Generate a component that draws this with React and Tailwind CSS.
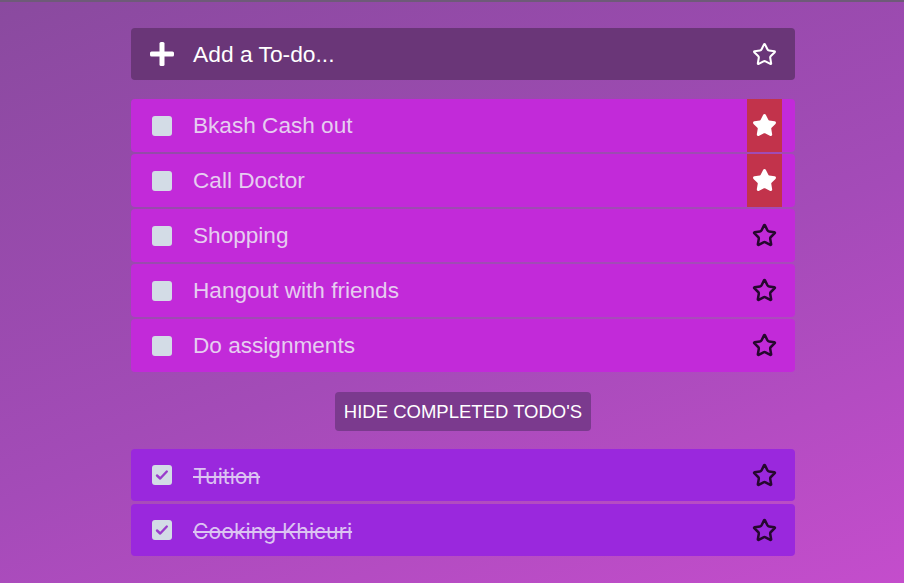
import React from "react";
import { Star } from "lucide-react";

const active = [
  { t: "Bkash Cash out", s: true },
  { t: "Call Doctor", s: true },
  { t: "Shopping", s: false },
  { t: "Hangout with friends", s: false },
  { t: "Do assignments", s: false },
];
const done = ["Tuition", "Cooking Khicuri"];

function Plus() {
  return (
    <svg width="26" height="26" viewBox="0 0 26 26">
      <rect x="10.5" y="1" width="5" height="24" rx="1.5" fill="white" />
      <rect x="1" y="10.5" width="24" height="5" rx="1.5" fill="white" />
    </svg>
  );
}

function Check() {
  return (
    <svg width="16" height="16" viewBox="0 0 16 16">
      <path d="M3 8.5l3.2 3 6.6-7" fill="none" stroke="#9a3ccc" strokeWidth="2.4" strokeLinecap="round" strokeLinejoin="round" />
    </svg>
  );
}

export default function App() {
  return (
    <div
      className="h-[583px] w-full overflow-hidden border-t-2 border-[#6e5a78] bg-[linear-gradient(160deg,#8a4a9f_0%,#a44bb8_55%,#c44dcc_100%)]"
      style={{ fontFamily: '"Liberation Sans", Arial, sans-serif' }}
    >
      <div className="ml-[131px] w-[664px] pt-[26px]">
        <div className="flex h-[52px] items-center rounded-[4px] bg-[#6a3678] pl-[18px] pr-[18px]">
          <Plus />
          <span className="ml-[18px] text-[22.8px] text-white">Add a To-do...</span>
          <div className="ml-auto flex">
            <Star size={25} color="white" strokeWidth={2} />
          </div>
        </div>

        <div className="mt-[19px] flex flex-col gap-[2px]">
          {active.map((it) => (
            <div key={it.t} className="flex h-[53px] items-center rounded-[4px] bg-[#c22ad9] pl-[21px] pr-[13px]">
              <div className="h-[20px] w-[20px] rounded-[3px] bg-[#d3dce6]" />
              <span className="ml-[21px] text-[22.6px] text-[#e6cdf0]">{it.t}</span>
              <div
                className={
                  "ml-auto flex h-full w-[35px] items-center justify-center " +
                  (it.s ? "bg-[#c2334b]" : "")
                }
              >
                {it.s ? (
                  <Star size={25} color="white" fill="white" strokeWidth={2} />
                ) : (
                  <Star size={25} color="#25082e" strokeWidth={2.4} />
                )}
              </div>
            </div>
          ))}
        </div>

        <div className="mt-[20px] flex justify-center">
          <button className="h-[39px] rounded-[4px] bg-[#7b3a8e] px-[9px] text-[18.5px] text-white">
            HIDE COMPLETED TODO'S
          </button>
        </div>

        <div className="mt-[18px] flex flex-col gap-[3px]">
          {done.map((t) => (
            <div key={t} className="flex h-[52px] items-center rounded-[4px] bg-[#9a28dd] pl-[21px] pr-[13px]">
              <div className="flex h-[20px] w-[20px] items-center justify-center rounded-[3px] bg-[#d3dce6]">
                <Check />
              </div>
              <span
                className="ml-[21px] pt-[3px] text-[21.2px] text-[#dcc3f2] line-through"
                style={{ fontFamily: "Inter, sans-serif" }}
              >
                {t}
              </span>
              <div className="ml-auto flex h-full w-[35px] items-center justify-center">
                <Star size={25} color="#25082e" strokeWidth={2.4} />
              </div>
            </div>
          ))}
        </div>
      </div>
    </div>
  );
}
